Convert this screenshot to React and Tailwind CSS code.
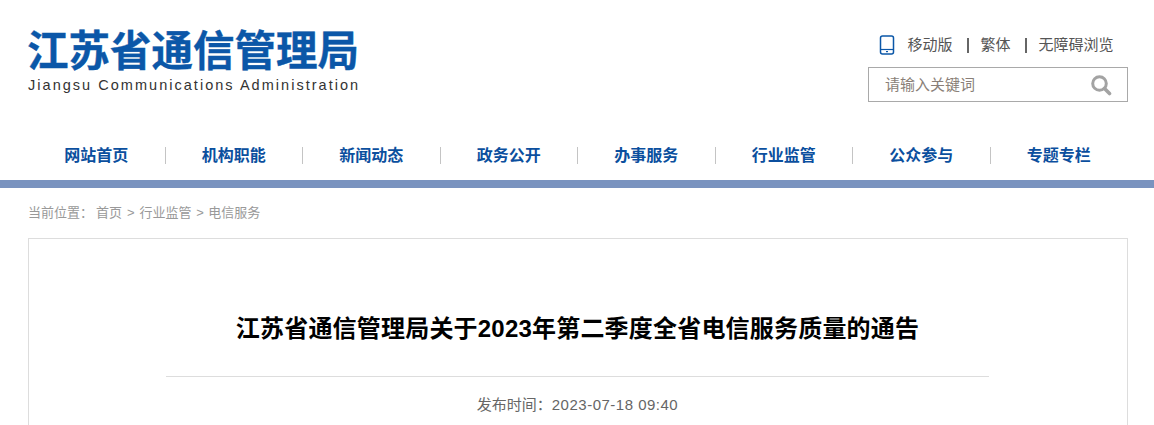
import React from 'react';

const cjk = '[font-family:"Liberation_Sans","Noto_Sans_CJK_SC",sans-serif]';

const navItems = ['网站首页', '机构职能', '新闻动态', '政务公开', '办事服务', '行业监管', '公众参与', '专题专栏'];

const PhoneIcon = () => (
    <svg width="16" height="20" viewBox="0 0 16 20" fill="none" className="shrink-0">
        <rect x="1.5" y="1" width="13" height="18" rx="2" stroke="#0b57a8" strokeWidth="1.5" />
        <path d="M1.5 14.5h13" stroke="#0b57a8" strokeWidth="1.2" />
        <rect x="7" y="16" width="2" height="1.2" fill="#0b57a8" />
    </svg>
);

const SearchIcon = () => (
    <svg width="22" height="22" viewBox="0 0 22 22" fill="none">
        <circle cx="9.5" cy="9.5" r="6.8" stroke="#a3a3a3" strokeWidth="3" />
        <path d="M14.5 14.5l5 5" stroke="#a3a3a3" strokeWidth="3.6" strokeLinecap="round" />
    </svg>
);

export default function App() {
    return (
        <div className={`h-[425px] w-[1154px] overflow-hidden bg-white ${cjk}`}>
            <div className="ml-[28px] w-[1100px]">
                {/* Header */}
                <div className="flex h-[136px] justify-between">
                    <div className="pt-[29px]">
                        <h1 className="-ml-[1px] h-[46px] text-[41.5px] leading-[46px] font-bold whitespace-nowrap text-[#0b57a8] [-webkit-text-stroke:0.4px_#0b57a8]">江苏省通信管理局</h1>
                        <p className="mt-[1px] text-[14.5px] leading-[18px] tracking-[2.03px] whitespace-nowrap text-[#333]">Jiangsu Communications Administration</p>
                    </div>
                    <div className="flex w-[260px] flex-col items-end pt-[35px]">
                        <div className="flex h-[20px] items-center text-[15px] text-[#555]">
                            <PhoneIcon />
                            <span className="ml-[12px]">移动版</span>
                            <span className="mr-[11px] ml-[15px] h-[15px] w-[2px] bg-[#666]" />
                            <span>繁体</span>
                            <span className="mr-[11px] ml-[15px] h-[15px] w-[2px] bg-[#666]" />
                            <span className="mr-[14.5px]">无障碍浏览</span>
                        </div>
                        <div className="mt-[12px] flex h-[35px] w-[260px] items-center justify-between border border-[#a9a9a9] pr-[15px] pl-[16px]">
                            <span className="pt-[1px] text-[15px] text-[#8a7f78]">请输入关键词</span>
                            <SearchIcon />
                        </div>
                    </div>
                </div>

                {/* Nav */}
                <div className="flex h-[44px] items-start">
                    {navItems.map((item, i) => (
                        <div key={item} className="relative flex h-[38px] flex-1 items-center justify-center pt-[2px] pr-[1px] text-[16px] font-bold text-[#0b4f9e]">
                            {item}
                            {i < navItems.length - 1 && <span className="absolute top-[11px] right-0 h-[17px] w-px bg-[#c4c4c4]" />}
                        </div>
                    ))}
                </div>
            </div>

            <div className="h-[8px] bg-[#7a93bf]" />

            <div className="ml-[28px] w-[1100px]">
                {/* Breadcrumb */}
                <div className="flex h-[50px] items-center text-[13px] whitespace-pre text-[#999]">
                    <span className="w-[68px]">当前位置：</span>
                    <span>首页</span>
                    <span className="mx-[5px]">&gt;</span>
                    <span>行业监管</span>
                    <span className="mx-[4.5px]">&gt;</span>
                    <span>电信服务</span>
                </div>

                {/* Article card */}
                <div className="h-[300px] border border-[#ddd] pt-[72px] pr-[138px] pl-[137px]">
                    <h2 className="text-center text-[24px] leading-[36px] font-bold tracking-[0.2px] text-black">江苏省通信管理局关于2023年第二季度全省电信服务质量的通告</h2>
                    <div className="mt-[29px] border-t border-[#ddd] pt-[18px] text-center text-[15px] leading-[20px] text-[#666]">
                        发布时间：<span className="tracking-[0.5px]">2023-07-18 09:40</span>
                    </div>
                </div>
            </div>
        </div>
    );
}
